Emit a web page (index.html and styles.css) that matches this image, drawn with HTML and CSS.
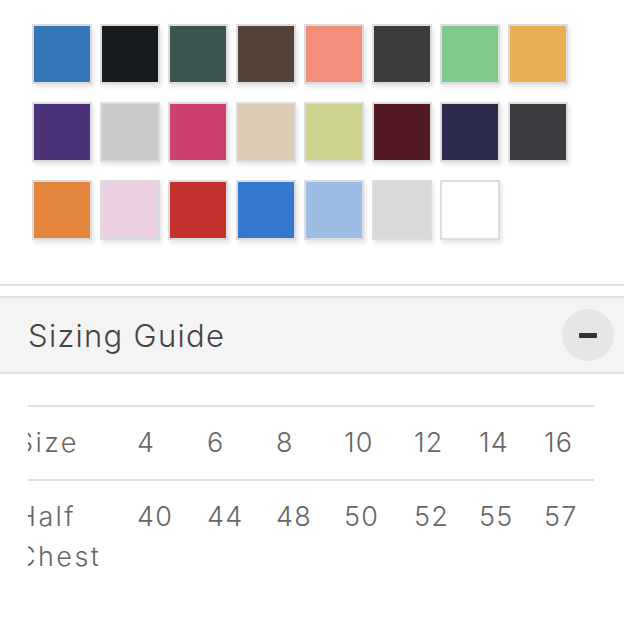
FILE: index.html
```html
<!DOCTYPE html>
<html lang="en">
<head>
<meta charset="utf-8">
<title>Colours and Sizing Guide</title>
<link rel="stylesheet" href="styles.css">
</head>
<body>
<section class="swatches">
  <span class="swatch c1"></span>
  <span class="swatch c2"></span>
  <span class="swatch c3"></span>
  <span class="swatch c4"></span>
  <span class="swatch c5"></span>
  <span class="swatch c6"></span>
  <span class="swatch c7"></span>
  <span class="swatch c8"></span>
  <span class="swatch c9"></span>
  <span class="swatch c10"></span>
  <span class="swatch c11"></span>
  <span class="swatch c12"></span>
  <span class="swatch c13"></span>
  <span class="swatch c14"></span>
  <span class="swatch c15"></span>
  <span class="swatch c16"></span>
  <span class="swatch c17"></span>
  <span class="swatch c18"></span>
  <span class="swatch c19"></span>
  <span class="swatch c20"></span>
  <span class="swatch c21"></span>
  <span class="swatch c22"></span>
  <span class="swatch c23"></span>
</section>
<section class="accordion">
  <div class="acc-header">
    <span class="acc-title">Sizing Guide</span>
    <button class="acc-toggle" aria-label="Collapse"><span class="minus"></span></button>
  </div>
  <div class="acc-body">
    <div class="table-scroll">
      <table class="size-table">
        <colgroup>
          <col class="w-label"><col class="w-a"><col class="w-b"><col class="w-c"><col class="w-a"><col class="w-d"><col class="w-d"><col class="w-e">
        </colgroup>
        <tr>
          <td class="label">Size</td><td>4</td><td>6</td><td>8</td><td>10</td><td>12</td><td>14</td><td>16</td>
        </tr>
        <tr>
          <td class="label">Half Chest</td><td>40</td><td>44</td><td>48</td><td>50</td><td>52</td><td>55</td><td>57</td>
        </tr>
      </table>
    </div>
  </div>
</section>
</body>
</html>
```
FILE: styles.css
```css
html, body {
  margin: 0;
  padding: 0;
  background: #ffffff;
}
body {
  font-family: "Inter", "Lato", "DejaVu Sans", sans-serif;
  font-weight: 300;
  width: 624px;
  overflow: hidden;
}
.swatches {
  display: grid;
  grid-template-columns: repeat(8, 60px);
  column-gap: 8px;
  row-gap: 18px;
  padding: 24px 0 44px 32px;
  border-bottom: 2px solid #e2e2e2;
}
.swatch {
  display: block;
  width: 60px;
  height: 60px;
  box-sizing: border-box;
  border: 2px solid #dcdbdd;
  box-shadow: 2px 3px 4px rgba(0, 0, 0, 0.10);
}
.c1 { background: #3477b9; }
.c2 { background: #171b1e; }
.c3 { background: #3c534f; }
.c4 { background: #524336; }
.c5 { background: #f28e79; }
.c6 { background: #3d3b3c; }
.c7 { background: #80c988; }
.c8 { background: #e7b055; }
.c9 { background: #4e3279; }
.c10 { background: #cbcbcb; }
.c11 { background: #cc3f71; }
.c12 { background: #d9cbb1; }
.c13 { background: #cfd390; }
.c14 { background: #511822; }
.c15 { background: #2c2b4b; }
.c16 { background: #3c3b3f; }
.c17 { background: #e3853c; }
.c18 { background: #ead0e2; }
.c19 { background: #c2312d; }
.c20 { background: #3678d0; }
.c21 { background: #9cbce3; }
.c22 { background: #d9d9d9; }
.c23 { background: #ffffff; }

.accordion {
  margin-top: 10px;
  border-top: 2px solid #e0e0e0;
}
.acc-header {
  display: flex;
  align-items: center;
  justify-content: space-between;
  height: 74px;
  padding: 0 10px 0 28px;
  background: #f4f4f4;
  border-bottom: 2px solid #e0e0e0;
}
.acc-title {
  font-size: 31px;
  letter-spacing: 1.3px;
  color: #444444;
}
.acc-toggle {
  display: flex;
  align-items: center;
  justify-content: center;
  width: 52px;
  height: 52px;
  padding: 0;
  border: none;
  border-radius: 50%;
  background: #e6e6e6;
}
.minus {
  display: block;
  width: 18px;
  height: 5px;
  background: #333333;
  border-radius: 1px;
}
.acc-body {
  padding: 31px 30px 0 28px;
}
.table-scroll {
  overflow: hidden;
}
.size-table {
  table-layout: fixed;
  width: 595px;
  margin-left: -12px;
  border-collapse: collapse;
  font-size: 27px;
  line-height: 40px;
  letter-spacing: 1.2px;
  color: #666666;
}
.size-table td {
  padding: 16px 16px 16px 0;
  border-top: 2px solid #e0e0e0;
  vertical-align: top;
  white-space: nowrap;
}
.size-table td.label {
  white-space: normal;
  letter-spacing: 2.4px;
  padding-right: 6px;
}
.w-label { width: 121px; }
.w-a { width: 70px; }
.w-b { width: 69px; }
.w-c { width: 68px; }
.w-d { width: 65px; }
.w-e { width: 67px; }
```
